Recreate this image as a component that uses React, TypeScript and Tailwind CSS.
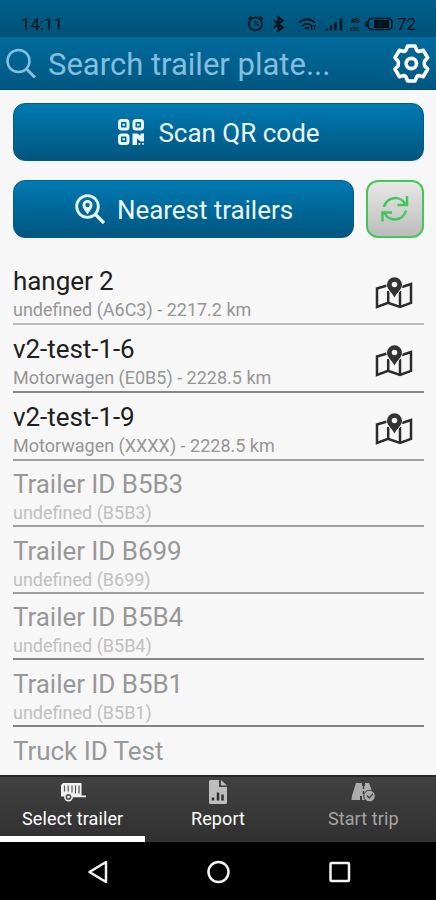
const trailers = [
  { name: "hanger 2", info: "undefined (A6C3) - 2217.2 km", near: true, line: "border-[#bdbdbd]" },
  { name: "v2-test-1-6", info: "Motorwagen (E0B5) - 2228.5 km", near: true, line: "border-[#858585]" },
  { name: "v2-test-1-9", info: "Motorwagen (XXXX) - 2228.5 km", near: true, line: "border-[#a0a0a0]" },
  { name: "Trailer ID B5B3", info: "undefined (B5B3)", near: false, line: "border-[#a0a0a0]" },
  { name: "Trailer ID B699", info: "undefined (B699)", near: false, line: "border-[#a0a0a0]" },
  { name: "Trailer ID B5B4", info: "undefined (B5B4)", near: false, line: "border-[#858585]" },
  { name: "Trailer ID B5B1", info: "undefined (B5B1)", near: false, line: "border-[#858585]" },
];

function StatusIcons() {
  return (
    <svg width="146" height="20" viewBox="0 0 146 20" className="fill-none stroke-[#04141d]" strokeWidth="1.7">
      {/* alarm */}
      <circle cx="8.5" cy="10" r="6.5" />
      <path d="M8.500 7v3.500h3.500M1.300 5.500l3-3M15.700 5.500l-3-3" />
      {/* bluetooth */}
      <path d="M27 6.500l8.500 7-4 3V3.500l4 3-8.500 7" strokeWidth="2.2" />
      {/* wifi */}
      <path d="M52 8.500q8-6.500 16 0M55 11.800q5-4 10 0M58 14.500q2-1.500 4 0" />
      <path d="M64.500 11v5M67.500 11v5" strokeWidth="1.3" />
      {/* signal */}
      <path d="M79.500 16.500v-2M84 16.500v-5M88.500 16.500v-8M94 16.500v-12" strokeWidth="2.5" />
      <text x="104" y="9" className="fill-[#04141d] stroke-none font-bold" fontSize="7">4G</text>
      <text x="103" y="17" className="fill-[#04141d] stroke-none font-bold" fontSize="6">LTE</text>
      <rect x="121" y="4.5" width="24" height="11" rx="4" />
      <path d="M118.800 7.500v5" />
      <rect x="127" y="6" width="15" height="8" className="fill-[#04141d] stroke-none" />
    </svg>
  );
}

function SearchIcon() {
  return (
    <svg width="32" height="32" viewBox="0 0 32 32" className="fill-none stroke-[#85bfdf]" strokeWidth="2.5">
      <circle cx="13.5" cy="13" r="11" />
      <path d="M21.500 21l8.500 8.500" strokeWidth="3" />
    </svg>
  );
}

function GearIcon() {
  return (
    <svg width="39" height="41" viewBox="17 16 117 123" className="fill-none stroke-white" strokeWidth="11" strokeLinejoin="round">
      <path d="M64 25H86L91 37Q94 42 99 41L111 38L124 60L115 70Q112 77 115 85L124 94L111 117L99 114Q94 113 91 118L86 130H64L59 118Q56 113 51 114L39 117L26 94L35 85Q38 77 35 70L26 60L39 38L51 41Q56 42 59 37Z" />
      <circle cx="75" cy="77.5" r="15.5" />
    </svg>
  );
}

function QrIcon() {
  return (
    <svg width="28" height="28" viewBox="0 0 28 28" className="fill-none stroke-[#eaf7ff]">
      <g strokeWidth="3">
        <rect x="2.5" y="2.5" width="8.5" height="8.5" rx="2" />
        <rect x="17" y="2.5" width="8.5" height="8.5" rx="2" />
        <rect x="2.5" y="17" width="8.5" height="8.5" rx="2" />
      </g>
      <path d="M5.500 6.700h2.500M20 6.700h2.500M5.500 21.200h2.500" strokeWidth="2" />
      <path d="M15.500 15.500h5l3 2.500v-2.500h3.500v8h-3.500l-3.500-3v6.500h-4.500z" className="fill-[#eaf7ff] stroke-none" />
      <path d="M21.500 25h1.800v1.800h-1.800zM25 25h1.800v1.800H25z" className="fill-[#eaf7ff] stroke-none" />
    </svg>
  );
}

function NearestIcon() {
  return (
    <svg width="32" height="32" viewBox="0 0 32 32" className="fill-none stroke-[#eaf7ff]">
      <circle cx="13.5" cy="13.5" r="10.8" strokeWidth="2.8" />
      <path d="M21.500 21.500l8.500 8.500" strokeWidth="3.2" />
      <path
        fillRule="evenodd"
        d="M13.500 21.500C11.500 18 8.500 15.500 8.500 12a5 5 0 0 1 10 0c0 3.500-3 6-5 9.500zM13.500 9.800a2.200 2.200 0 1 0 0 4.400 2.200 2.200 0 0 0 0-4.400z"
        className="fill-[#eaf7ff] stroke-none"
      />
    </svg>
  );
}

function RefreshIcon() {
  return (
    <svg width="30" height="30" viewBox="0 0 30 30" className="fill-none stroke-[#43c75b]" strokeWidth="2.5">
      <path d="M4 13a11.500 11.500 0 0 1 21.500-2.500M27 2v9h-9.500" />
      <path d="M26 16.500a11.500 11.500 0 0 1-21.500 2.500M2.500 27.500v-9h9.500" />
    </svg>
  );
}

function MapIcon() {
  return (
    <svg width="38" height="34" viewBox="0 0 38 34" className="fill-none stroke-[#2c2c2c]" strokeWidth="2.5">
      <path d="M12 9.500L2 12.500v18.500l11-4.200 12 4.200 11-4.200V8l-9 3" />
      <path d="M13.200 27V15M25 30.500V15" />
      {/* pin, with a light rim that parts it from the map */}
      <path
        d="M19.500 21.500C17 16.500 12.300 13.500 12.300 8.700a7.200 7.200 0 0 1 14.400 0c0 4.800-4.700 7.800-7.200 12.800z"
        className="fill-[#f7f7f7] stroke-[#f7f7f7]"
        strokeWidth="2"
      />
      <path
        fillRule="evenodd"
        d="M19.500 21.500C17 16.500 12 13.500 12 8.700a7.500 7.500 0 0 1 15 0c0 4.800-5 7.800-7.500 12.800zM19.500 5.700a2.800 2.800 0 1 0 0 5.600 2.800 2.800 0 0 0 0-5.600z"
        className="fill-[#333] stroke-none"
      />
    </svg>
  );
}

function TrailerIcon() {
  return (
    <svg width="26" height="20" viewBox="0 0 26 20">
      <path d="M1 3L3 1h18.500v12.500H26v1.800H12v-.8H1z" fill="#f1f1f1" />
      <path d="M4.500 3.500v6M8.200 3.500v6M12 3.500v7M15.500 3.500v8M19 3.500v8" stroke="#555" strokeWidth="1.2" />
      <circle cx="8.5" cy="15" r="3.7" fill="#555" stroke="#f1f1f1" strokeWidth="1.5" />
      <circle cx="8.5" cy="15" r="1.3" fill="#f1f1f1" />
    </svg>
  );
}

function ReportIcon() {
  return (
    <svg width="20" height="26" viewBox="0 0 20 26">
      <path d="M1 2.500Q1 1 2.500 1H11v7h8v15.500q0 1.500-1.500 1.500h-15Q1 25 1 23.500zM13 1l6 5.500h-6z" fill="#bdbdbd" />
      <path d="M5 21.500v-3M10 21.500v-8M14.500 21.500v-6" stroke="#303030" strokeWidth="2.5" />
    </svg>
  );
}

function TripIcon() {
  return (
    <svg width="26" height="22" viewBox="0 0 26 22">
      <path d="M6 2h6v3h3V2h4l3 8-2 9h-8v-4h-2v4H1.500q0-4 2-9z" fill="#adadad" />
      <path d="M13.500 5v3M13.500 10v3" stroke="#3a3a3a" strokeWidth="1.3" />
      <circle cx="19.5" cy="15" r="5.8" fill="#adadad" stroke="#3a3a3a" strokeWidth="1" />
      <path d="M17 14.500l2.300 2.500 3.500-4.200" fill="none" stroke="#444" strokeWidth="1.4" />
    </svg>
  );
}

export default function App() {
  return (
    <div className="flex h-[900px] w-[436px] flex-col overflow-hidden bg-[#f7f7f7] font-['Roboto',sans-serif]">
      <div className="flex h-[37px] shrink-0 items-end bg-linear-to-b from-[#005f8b] to-[#005277] pl-[21px] text-[#04141d]">
        <p className="w-[226px] text-[17px] leading-[26px] tracking-[-0.1px]">14:11</p>
        <div className="mb-[3px]"><StatusIcons /></div>
        <p className="ml-[4px] text-[17px] leading-[26px]">72</p>
      </div>
      <div className="flex h-[53px] shrink-0 items-center border-b border-[#004d78] bg-linear-to-b from-[#006b9e] to-[#005780] pl-[5px]">
        <div className="mt-[2px]"><SearchIcon /></div>
        <p className="mt-[5px] ml-[11px] w-[344px] text-[31px] text-[#83bedf]">Search trailer plate...</p>
        <div className="shrink-0"><GearIcon /></div>
      </div>

      <div className="flex shrink-0 flex-col gap-[19px] pt-[13px] pr-3 pl-[13px]">
        <button className="flex h-[58px] items-center justify-center rounded-xl border border-[#005e8d] bg-linear-to-b from-[#007ab3] to-[#005680]">
          <QrIcon />
          <span className="mt-[3px] ml-[13px] text-[26px] text-[#eaf7ff]">Scan QR code</span>
        </button>
        <div className="flex gap-3">
          <button className="flex h-[58px] w-[341px] items-center justify-center rounded-xl border border-[#005e8d] bg-linear-to-b from-[#007ab3] to-[#005680]">
            <NearestIcon />
            <span className="mt-[3px] ml-[11px] text-[26px] tracking-[-0.05px] text-[#eaf7ff]">Nearest trailers</span>
          </button>
          <button className="flex h-[58px] w-[58px] items-center justify-center rounded-xl border-2 border-[#43c75b] bg-linear-to-b from-[#e8e8e8] to-[#bcbcbc]">
            <RefreshIcon />
          </button>
        </div>
      </div>

      <div className="mt-[18.5px] min-h-0 flex-1 overflow-hidden pr-3 pl-[13px]">
        {trailers.map((t) => (
          <div
            key={t.name}
            className={`flex items-center justify-between border-b-2 ${t.line} ${t.near ? "h-[68px]" : "h-[66.6px]"}`}
          >
            <div className="pt-[7px]">
              <h2 className={`text-[26px] leading-[34px] tracking-[-0.05px] ${t.near ? "text-[#202020]" : "text-[#989898]"}`}>{t.name}</h2>
              <p className={`text-[18px] leading-[24px] ${t.near ? "text-[#969696]" : "text-[#c0c0c0]"}`}>{t.info}</p>
            </div>
            {t.near && (
              <div className="mt-[6px] mr-[11px]">
                <MapIcon />
              </div>
            )}
          </div>
        ))}
        <h2 className="pt-[7px] text-[26px] leading-[34px] tracking-[-0.05px] text-[#989898]">Truck ID Test</h2>
      </div>

      {/* bottom tabs */}
      <div className="grid h-[67px] shrink-0 grid-cols-3 border-t-2 border-[#272727] bg-linear-to-b from-[#414141] to-[#303030] text-[18px] tracking-[0.1px]">
        <div className="flex flex-col items-center border-b-6 border-white text-white">
          <div className="flex h-[30px] items-center"><TrailerIcon /></div>
          <p className="leading-[24px]">Select trailer</p>
        </div>
        <div className="flex flex-col items-center text-white">
          <div className="flex h-[30px] items-center"><ReportIcon /></div>
          <p className="leading-[24px]">Report</p>
        </div>
        <div className="flex flex-col items-center text-[#a5a5a5]">
          <div className="flex h-[30px] items-center"><TripIcon /></div>
          <p className="leading-[24px]">Start trip</p>
        </div>
      </div>
      <div className="flex h-[58px] shrink-0 items-center bg-black">
        <svg width="436" height="58" viewBox="0 0 436 58" fill="none" stroke="#f4f4f4" strokeWidth="2.5" strokeLinejoin="round">
          <path d="M106 20v20L89.500 30z" />
          <circle cx="218.5" cy="30" r="10" />
          <rect x="330.5" y="21" width="18.5" height="18" rx="1" />
        </svg>
      </div>
    </div>
  );
}
